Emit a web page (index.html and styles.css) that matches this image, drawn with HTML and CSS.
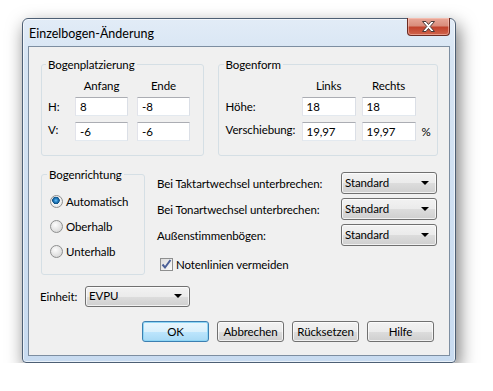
FILE: index.html
```html
<!DOCTYPE html>
<html lang="de">
<head>
    <meta charset="UTF-8">
    <title>Einzelbogen-Änderung</title>
    <link rel="stylesheet" href="styles.css">
</head>
<body>
    <div class="window">
        <div class="titlebar">
            <span class="title">Einzelbogen-Änderung</span>
            <div class="close-btn">
                <svg width="15" height="11" viewBox="0 0 15 11">
                    <path d="M1.5 0.5h3.5l2.5 3 2.5-3h3.5l-4.3 5 4.3 5h-3.5l-2.5-3-2.5 3h-3.5l4.3-5z" fill="#fff" stroke="#4a3a38" stroke-width="1" stroke-linejoin="round"/>
                </svg>
            </div>
        </div>
        <div class="client">
            <div class="top-row">
                <fieldset class="group group-place">
                    <legend>Bogenplatzierung</legend>
                    <div class="place-grid">
                        <span></span>
                        <span class="col-head">Anfang</span>
                        <span class="col-head">Ende</span>
                        <span class="lbl">H:</span>
                        <input class="textbox" type="text" value="8">
                        <input class="textbox" type="text" value="-8">
                        <span class="lbl">V:</span>
                        <input class="textbox" type="text" value="-6">
                        <input class="textbox" type="text" value="-6">
                    </div>
                </fieldset>
                <fieldset class="group group-form">
                    <legend>Bogenform</legend>
                    <div class="form-grid">
                        <span></span>
                        <span class="col-head">Links</span>
                        <span class="col-head">Rechts</span>
                        <span></span>
                        <span class="lbl">Höhe:</span>
                        <input class="textbox" type="text" value="18">
                        <input class="textbox" type="text" value="18">
                        <span></span>
                        <span class="lbl">Verschiebung:</span>
                        <input class="textbox" type="text" value="19,97">
                        <input class="textbox" type="text" value="19,97">
                        <span class="lbl">%</span>
                    </div>
                </fieldset>
            </div>

            <div class="mid-row">
                <fieldset class="group group-dir">
                    <legend>Bogenrichtung</legend>
                    <label class="radio-row"><span class="radio checked"></span>Automatisch</label>
                    <label class="radio-row"><span class="radio"></span>Oberhalb</label>
                    <label class="radio-row"><span class="radio"></span>Unterhalb</label>
                </fieldset>
                <div class="options">
                    <div class="option-row">
                        <span>Bei Taktartwechsel unterbrechen:</span>
                        <div class="combo">Standard</div>
                    </div>
                    <div class="option-row">
                        <span>Bei Tonartwechsel unterbrechen:</span>
                        <div class="combo">Standard</div>
                    </div>
                    <div class="option-row">
                        <span>Außenstimmenbögen:</span>
                        <div class="combo">Standard</div>
                    </div>
                    <label class="check-row">
                        <span class="checkbox">
                            <svg width="11" height="11" viewBox="0 0 11 11">
                                <path d="M1.5 5.5l2.5 3 5.5-7.5" fill="none" stroke="#4a5f97" stroke-width="2"/>
                            </svg>
                        </span>
                        Notenlinien vermeiden
                    </label>
                </div>
            </div>

            <div class="unit-row">
                <span class="unit-label">Einheit:</span>
                <div class="combo combo-unit">EVPU</div>
            </div>

            <div class="button-row">
                <button class="btn btn-default">OK</button>
                <button class="btn">Abbrechen</button>
                <button class="btn">Rücksetzen</button>
                <button class="btn">Hilfe</button>
            </div>
        </div>
    </div>
</body>
</html>
```

FILE: styles.css
```css
body {
    margin: 0;
    background: #fff;
    font-family: Lato, "Liberation Sans", sans-serif;
    font-size: 11.5px;
    letter-spacing: -0.1px;
    color: #000;
}
.window {
    box-sizing: border-box;
    width: 434px;
    height: 345px;
    margin: 18px 0 0 22px;
    padding: 0 5px 6px 5px;
    display: flex;
    flex-direction: column;
    border: 1px solid #4d5f74;
    border-radius: 6px 6px 4px 4px;
    background: linear-gradient(#e2ecf7, #d6e4f3 12%, #c8dbf0 100%);
    box-shadow: 3px 7px 18px rgba(0, 0, 0, 0.55), inset 0 0 0 1px rgba(255, 255, 255, 0.6);
}
.titlebar {
    height: 27px;
    display: flex;
    justify-content: space-between;
    align-items: flex-start;
}
.title {
    margin: 7px 0 0 1px;
    font-size: 12.5px;
    letter-spacing: 0;
}
.close-btn {
    box-sizing: border-box;
    width: 43px;
    height: 18px;
    margin-top: -1px;
    display: flex;
    align-items: center;
    justify-content: center;
    border: 1px solid #6b2b22;
    border-top: none;
    border-radius: 0 0 4px 4px;
    background: linear-gradient(#e9a899, #d98d7c 45%, #c2432d 55%, #d0644c);
    box-shadow: inset 0 0 0 1px rgba(255, 210, 200, 0.5);
}
.client {
    flex: 1;
    border: 1px solid #7d8ea1;
    background: #f0f0f0;
    padding: 10px 11px 0 12px;
}
.top-row {
    display: flex;
    gap: 14px;
}
.group {
    box-sizing: border-box;
    margin: 0;
    min-width: 0;
    border: 1px solid #d5dfe5;
    border-radius: 3px;
}
.group legend {
    padding: 0 2px;
    margin-left: -2px;
    line-height: 15px;
}
.group-place {
    width: 163px;
    padding: 6px 6px 16px 6px;
}
.group-form {
    width: 221px;
    padding: 6px 7px 16px 7px;
}
.place-grid {
    display: grid;
    grid-template-columns: 18px 53px 53px;
    grid-template-rows: 15px 19px 19px;
    column-gap: 9px;
    row-gap: 4px;
    align-items: center;
}
.place-grid .textbox:nth-child(n+7) {
    margin-top: 3px;
}
.form-grid {
    display: grid;
    grid-template-columns: 70px 54px 54px auto;
    grid-template-rows: 15px 19px 19px;
    column-gap: 6px;
    row-gap: 4px;
    align-items: center;
}
.form-grid .textbox:nth-child(n+10) {
    margin-top: 3px;
}
.form-grid .lbl:last-child {
    margin-top: 3px;
}
.col-head {
    text-align: center;
    line-height: 15px;
}
.lbl {
    white-space: nowrap;
}
.textbox {
    box-sizing: border-box;
    width: 100%;
    height: 19px;
    margin: 0;
    padding: 0 4px;
    border: 1px solid;
    border-color: #abadb3 #dbdfe6 #e3e9ef #e2e3ea;
    background: #fff;
    font-family: inherit;
    font-size: 11.5px;
    letter-spacing: -0.1px;
    color: #000;
    outline: none;
}
.mid-row {
    display: flex;
    gap: 12px;
    margin-top: 11px;
}
.group-dir {
    width: 104px;
    padding: 7px 6px 10px 8px;
}
.group-dir legend {
    margin-left: -3px;
}
.radio-row {
    display: flex;
    align-items: center;
    gap: 3px;
    height: 25px;
    white-space: nowrap;
}
.radio {
    box-sizing: border-box;
    width: 13px;
    height: 13px;
    border-radius: 50%;
    border: 1px solid #8e8f8f;
    background: radial-gradient(circle at 40% 35%, #fcfcfc, #dcdcdc 70%, #c8c8c8);
}
.radio.checked {
    background: radial-gradient(circle at 45% 40%, #6cc0f0 0, #2e8bd0 1.5px, #0d4f82 3.5px, #f4f4f4 4px, #dcdcdc 100%);
}
.options {
    flex: 1;
    padding-top: 5px;
    margin-right: 1px;
    display: flex;
    flex-direction: column;
    gap: 4px;
}
.option-row {
    display: flex;
    align-items: center;
    justify-content: space-between;
    height: 22px;
    white-space: nowrap;
}
.combo {
    position: relative;
    box-sizing: border-box;
    width: 96px;
    height: 22px;
    padding: 3px 0 0 3px;
    border: 1px solid #707070;
    border-radius: 3px;
    background: linear-gradient(#f2f2f2, #ebebeb 50%, #dddddd 50%, #cfcfcf);
    box-shadow: inset 0 0 0 1px rgba(255, 255, 255, 0.7);
}
.combo::after {
    content: "";
    position: absolute;
    right: 7px;
    top: 8px;
    border-left: 4px solid transparent;
    border-right: 4px solid transparent;
    border-top: 4px solid #000;
}
.check-row {
    display: flex;
    align-items: center;
    gap: 3px;
    margin-top: 8px;
    margin-left: 3px;
    white-space: nowrap;
}
.checkbox {
    box-sizing: border-box;
    width: 13px;
    height: 13px;
    display: flex;
    align-items: center;
    justify-content: center;
    border: 1px solid #8e8f8f;
    background: linear-gradient(135deg, #dcdcdc, #fafafa);
}
.unit-row {
    display: flex;
    align-items: center;
    margin-top: 11px;
}
.unit-label {
    width: 45px;
    margin-left: -1px;
}
.combo-unit {
    width: 105px;
    height: 21px;
    padding-top: 2px;
}
.combo-unit::after {
    top: 7px;
}
.button-row {
    display: flex;
    justify-content: flex-end;
    gap: 8px;
    margin-top: 14px;
    padding-right: 4px;
}
.btn {
    box-sizing: border-box;
    width: 67px;
    height: 21px;
    padding: 0;
    border: 1px solid #707070;
    border-radius: 3px;
    background: linear-gradient(#f2f2f2, #ebebeb 50%, #dddddd 50%, #cfcfcf);
    box-shadow: inset 0 0 0 1px rgba(255, 255, 255, 0.7);
    font-family: inherit;
    font-size: 11.5px;
    letter-spacing: -0.1px;
    color: #000;
}
.btn-default {
    border-color: #3c7fb1;
    background: linear-gradient(#eaf6fd, #d9f0fc 50%, #bee6fd 50%, #a7d9f5);
    box-shadow: inset 0 0 0 1px #8fd6f5;
}
```
